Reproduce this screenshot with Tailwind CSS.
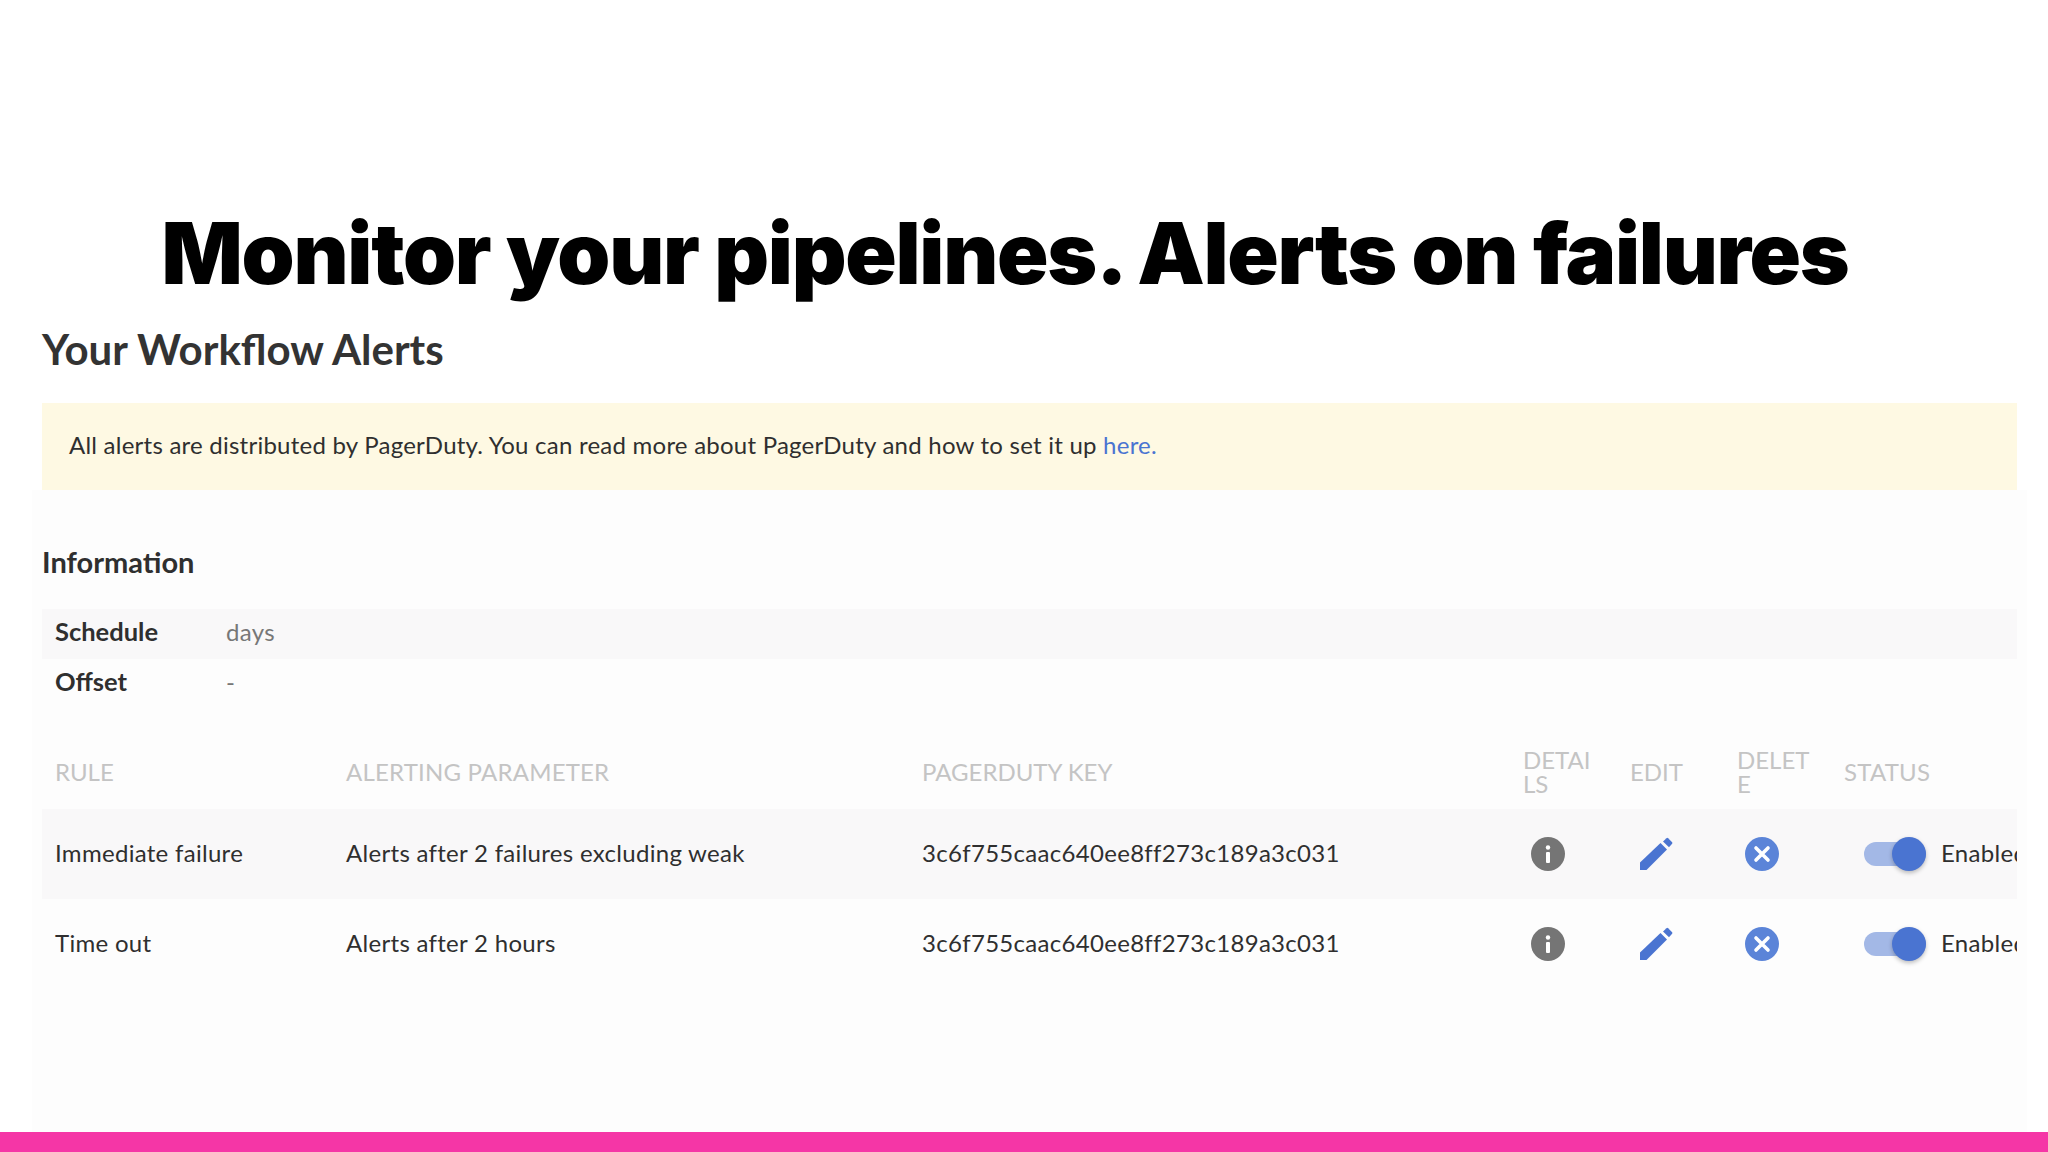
<!DOCTYPE html>
<html>
<head>
<meta charset="utf-8">
<script src="https://cdn.jsdelivr.net/npm/@tailwindcss/browser@4"></script>
</head>
<body class="bg-white font-['Lato',sans-serif] text-[#2f2f2f]">
<div class="w-[2048px] h-[1152px] flex flex-col overflow-hidden">
  <h1 class="h-[100px] mt-[203px] flex items-center justify-center pr-[38px] font-['Inter',sans-serif] font-black text-[85px] tracking-[-1.3px] leading-none text-black whitespace-nowrap">Monitor your pipelines. Alerts on failures</h1>
  <div class="flex-1 ml-[42px] mr-[31px] flex flex-col">
    <h2 class="mt-[21px] h-[50px] flex items-center text-[42px] font-bold text-[#333]">Your Workflow Alerts</h2>
    <div class="mt-[29px] h-[87px] bg-[#fef9e3] flex items-center pl-[27px] pb-[4px] text-[24px] tracking-[0.235px]">
      <span>All alerts are distributed by PagerDuty. You can read more about PagerDuty and how to set it up <span class="text-[#4a74d1]">here.</span></span>
    </div>
    <div class="flex-1 -mx-[10px] px-[10px] bg-[#fdfdfd]">
      <h3 class="mt-[55px] h-[34px] flex items-center text-[29px] font-bold">Information</h3>
      <div class="mt-[30px] h-[50px] bg-[#f9f8f9] flex items-center pl-[13px] pb-[5px] text-[24px]">
        <span class="w-[171px] font-bold text-[25.5px]">Schedule</span><span class="text-[#777] tracking-[0.3px]">days</span>
      </div>
      <div class="h-[50px] flex items-center pl-[13px] pb-[5px] text-[24px]">
        <span class="w-[171px] font-bold text-[25.5px]">Offset</span><span class="text-[#777]">-</span>
      </div>
      <div class="mt-[30px] h-[70px] flex items-center pl-[13px] pb-[5px] text-[24px] leading-[24px] text-[#c4c4c4]">
        <span class="w-[291px]">RULE</span>
        <span class="w-[576px] tracking-[0.2px]">ALERTING PARAMETER</span>
        <span class="w-[601px]">PAGERDUTY KEY</span>
        <span class="w-[107px] pr-[32px] break-all">DETAILS</span>
        <span class="w-[107px]">EDIT</span>
        <span class="w-[107px] pr-[32px] break-all">DELETE</span>
        <span class="tracking-[0.2px]">STATUS</span>
      </div>
      <div class="h-[90px] bg-[#f9f8f9] flex items-center pl-[13px] text-[24px] tracking-[0.3px] overflow-hidden whitespace-nowrap">
        <span class="w-[291px] shrink-0 pb-[2px]">Immediate failure</span>
        <span class="w-[576px] shrink-0 pb-[2px]">Alerts after 2 failures excluding weak</span>
        <span class="w-[601px] shrink-0 pb-[2px]">3c6f755caac640ee8ff273c189a3c031</span>
        <span class="w-[107px] shrink-0 pl-[8px]">
          <svg width="34" height="34" viewBox="0 0 34 34"><circle cx="17" cy="17" r="17" fill="#757575"/><rect x="15" y="15" width="4" height="11" rx="1" fill="#fff"/><circle cx="17" cy="10.5" r="2.2" fill="#fff"/></svg>
        </span>
        <span class="w-[107px] shrink-0 pl-[9px]">
          <svg width="34" height="34" viewBox="0 0 34 34"><path d="M1 25.500 21.500 6l6.500 6.500L7.500 33H1z" fill="#4a74d1"/><path d="M24 4.500 27.500 1.200q.8-.7 1.600 0l4 4q.7.8 0 1.600L30 10.200z" fill="#4a74d1"/></svg>
        </span>
        <span class="w-[107px] shrink-0 pl-[8px]">
          <svg width="34" height="34" viewBox="0 0 34 34"><circle cx="17" cy="17" r="17" fill="#5b84d8"/><path d="M11 11 23 23M23 11 11 23" stroke="#fff" stroke-width="3.600" stroke-linecap="round"/></svg>
        </span>
        <span class="shrink-0 flex items-center pl-[20px]">
          <span class="relative w-[62px] h-[24px] rounded-full bg-[#a3b8e6]">
            <span class="absolute right-0 top-[-5px] w-[34px] h-[34px] rounded-full bg-[#4a74d1] shadow-[0_2px_4px_rgba(0,0,0,0.25)]"></span>
          </span>
          <span class="ml-[15px] pb-[2px]">Enabled</span>
        </span>
      </div>
      <div class="h-[90px] flex items-center pl-[13px] text-[24px] tracking-[0.3px] overflow-hidden whitespace-nowrap">
        <span class="w-[291px] shrink-0 pb-[2px]">Time out</span>
        <span class="w-[576px] shrink-0 pb-[2px]">Alerts after 2 hours</span>
        <span class="w-[601px] shrink-0 pb-[2px]">3c6f755caac640ee8ff273c189a3c031</span>
        <span class="w-[107px] shrink-0 pl-[8px]">
          <svg width="34" height="34" viewBox="0 0 34 34"><circle cx="17" cy="17" r="17" fill="#757575"/><rect x="15" y="15" width="4" height="11" rx="1" fill="#fff"/><circle cx="17" cy="10.5" r="2.2" fill="#fff"/></svg>
        </span>
        <span class="w-[107px] shrink-0 pl-[9px]">
          <svg width="34" height="34" viewBox="0 0 34 34"><path d="M1 25.500 21.500 6l6.500 6.500L7.500 33H1z" fill="#4a74d1"/><path d="M24 4.500 27.500 1.200q.8-.7 1.600 0l4 4q.7.8 0 1.600L30 10.200z" fill="#4a74d1"/></svg>
        </span>
        <span class="w-[107px] shrink-0 pl-[8px]">
          <svg width="34" height="34" viewBox="0 0 34 34"><circle cx="17" cy="17" r="17" fill="#5b84d8"/><path d="M11 11 23 23M23 11 11 23" stroke="#fff" stroke-width="3.600" stroke-linecap="round"/></svg>
        </span>
        <span class="shrink-0 flex items-center pl-[20px]">
          <span class="relative w-[62px] h-[24px] rounded-full bg-[#a3b8e6]">
            <span class="absolute right-0 top-[-5px] w-[34px] h-[34px] rounded-full bg-[#4a74d1] shadow-[0_2px_4px_rgba(0,0,0,0.25)]"></span>
          </span>
          <span class="ml-[15px] pb-[2px]">Enabled</span>
        </span>
      </div>
    </div>
  </div>
  <div class="h-[20px] bg-[#f536a6]"></div>
</div>
</body>
</html>
